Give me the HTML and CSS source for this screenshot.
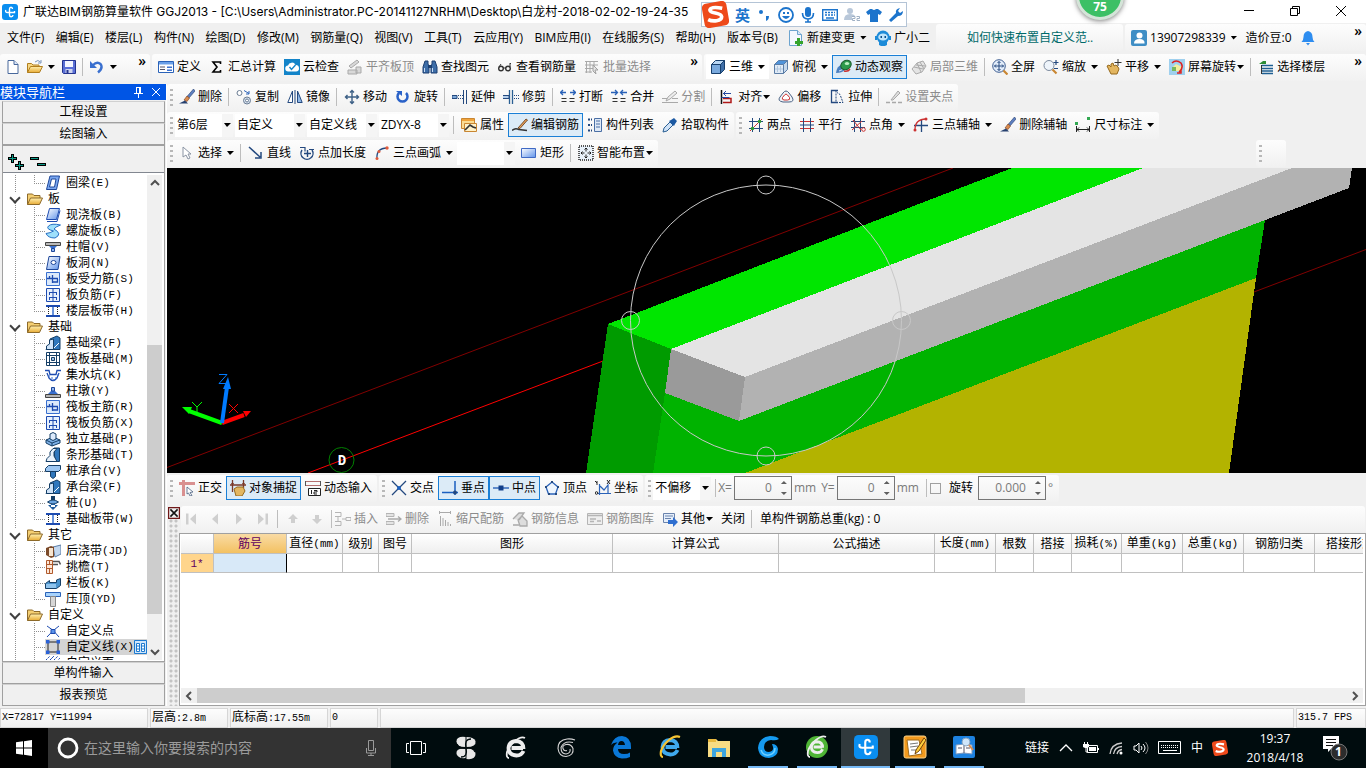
FILE: index.html
```html
<!DOCTYPE html>
<html lang="zh-CN">
<head>
    <meta charset="UTF-8">
    <meta name="viewport" content="width=device-width, initial-scale=1.0">
    <title>广联达BIM钢筋算量软件 GGJ2013</title>
    <link rel="stylesheet" href="styles.css">
</head>
<body>

<!-- icon set -->
<svg class="sprite" width="0" height="0" aria-hidden="true">
    <defs>
        <linearGradient id="g-blue" x1="0" y1="0" x2="1" y2="1"><stop offset="0" stop-color="#fff"/><stop offset="1" stop-color="#5f93ea"/></linearGradient>
        <linearGradient id="g-gold" x1="0" y1="0" x2="0" y2="1"><stop offset="0" stop-color="#fff0b0"/><stop offset="1" stop-color="#e8ab35"/></linearGradient>
    </defs>
    <symbol id="i-app" viewBox="0 0 16 16"><rect width="16" height="16" rx="3" fill="#0a8ef0"/><path d="M10.500 5q0-1.800-1.500-1.800T7.500 5v6q0 1.800 1.700 1.800T11 11M3.800 6q-.8 2.500 1.700 2.500h7V7" fill="none" stroke="#fff" stroke-width="1.400"/></symbol>
    <symbol id="i-doc" viewBox="0 0 16 16"><path d="M3 1.500h6l4 4v9H3z" fill="#fff" stroke="#48689c"/><path d="M9 1.500v4h4" fill="#dce8fa" stroke="#48689c"/></symbol>
    <symbol id="i-open" viewBox="0 0 16 16"><path d="M.5 13.500v-9h4l1.500 1.500h6v2" fill="#f6d784" stroke="#b07e1e"/><path d="M.5 13.500l3-6h12l-3 6z" fill="url(#g-gold)" stroke="#b07e1e"/><path d="M8 3q3-3 5.500 0M14 1v3h-3" fill="none" stroke="#7894bb"/></symbol>
    <symbol id="i-save" viewBox="0 0 16 16"><path d="M1.500 1.500h13v13h-12l-1-1z" fill="#5a6fd6" stroke="#24348f"/><path d="M4 2h8v6H4z" fill="#f4f6ff"/><path d="M4.500 10h7v4h-7z" fill="#cfd5ef"/><path d="M5.500 11h2v3h-2z" fill="#24348f"/></symbol>
    <symbol id="i-undo" viewBox="0 0 16 16"><path d="M4 6q4-4 7.500-1 3 4-2.500 8.500" fill="none" stroke="#3a70cf" stroke-width="2.400"/><path d="M1 2v7h7z" fill="#3a70cf"/></symbol>
    <symbol id="i-define" viewBox="0 0 16 16"><path d="M.5 2.500h15v11H.5z" fill="#fff" stroke="#2a62b8"/><path d="M1 3h14v2.500H1z" fill="#6ba0e8"/><path d="M2 8h5M2 10.500h5" stroke="#556"/><path d="M9 7.500h5v1.500H9zM9 10.500h5v1.500H9z" fill="#3a70cf"/></symbol>
    <symbol id="i-sum" viewBox="0 0 16 16"><path d="M11.500 5V3H4l4 5-4 5h7.500v-2" fill="none" stroke="#000" stroke-width="1.600"/></symbol>
    <symbol id="i-cloud" viewBox="0 0 16 16"><path d="M0 0h16v16H0z" fill="#1384c9"/><path d="M4.500 12.500a3 3 0 0 1-.5-6 4 4 0 0 1 7.500-.5 3.200 3.200 0 0 1 .5 6.500z" fill="#fff"/><path d="M5.500 8l2 2.500 4-4.500" fill="none" stroke="#1384c9" stroke-width="1.400"/></symbol>
    <symbol id="i-level" viewBox="0 0 16 16"><path d="M2 7l8-6 2 2-8 6zM1 11h9v4H1zM9 8h5v6H9z" fill="#d8d8d8" stroke="#a9a9a9"/></symbol>
    <symbol id="i-binoc" viewBox="0 0 16 16"><path d="M3 2h3v3l1 2v7H1V8zM13 2h-3v3L9 7v7h6V8z" fill="#3d6da8" stroke="#1c3f70"/><path d="M2.500 9v4M10.500 9v4" stroke="#c8dcf4"/><path d="M6 6h4v3H6z" fill="#1c3f70"/></symbol>
    <symbol id="i-glasses" viewBox="0 0 16 16"><circle cx="4" cy="9.500" r="2.300" fill="none" stroke="#333" stroke-width="1.400"/><circle cx="11" cy="9.500" r="2.300" fill="none" stroke="#333" stroke-width="1.400"/><path d="M6 9h3M2 8l2-3M13 8V4l1 1" fill="none" stroke="#333"/></symbol>
    <symbol id="i-batch" viewBox="0 0 16 16"><path d="M1 2.500h13M1 6h13M1 9.500h9M1 13h7M2.500 2v12M6 2v12M10 2v6" stroke="#aaa" fill="none"/><path d="M9 6l5 5h-3l1 4-3-3z" fill="#e5e5e5" stroke="#a0a0a0"/></symbol>
    <symbol id="i-cube" viewBox="0 0 16 16"><path d="M1.500 5.500h9v9h-9z" fill="#79a9dd" stroke="#173f6d"/><path d="M1.500 5.500l4-4h9l-4 4z" fill="#b9d7f4" stroke="#173f6d"/><path d="M10.500 5.500l4-4v9l-4 4z" fill="#3e6fa8" stroke="#173f6d"/></symbol>
    <symbol id="i-topview" viewBox="0 0 16 16"><path d="M1.500 5.500h9v9h-9z" fill="#dfeaf6" stroke="#5b7da6"/><path d="M1.500 5.500l4-4h9l-4 4z" fill="#4f93da" stroke="#5b7da6"/><path d="M10.500 5.500l4-4v9l-4 4z" fill="#c6d8ec" stroke="#5b7da6"/><path d="M4.500 7v6M7.500 7v6M2 10h8" stroke="#b1c6de"/></symbol>
    <symbol id="i-orbit" viewBox="0 0 16 16"><path d="M0 14q1-7 5-8l4 5q-3 3-9 3z" fill="#4a7fc0"/><path d="M3 12q5-1 7-5" fill="none" stroke="#d8e6f6"/><ellipse cx="10" cy="6" rx="5.500" ry="4.500" fill="#2d9a4c" stroke="#1c5e30" transform="rotate(-35 10 6)"/><ellipse cx="11" cy="4.500" rx="2.200" ry="1.500" fill="#bdf0c4"/><path d="M8 12q4 1 6-2" fill="none" stroke="#c33" stroke-width="1.500"/></symbol>
    <symbol id="i-part3d" viewBox="0 0 16 16"><path d="M1 10l5-6 6-2 3 5-4 6-6 2z" fill="#e4e4e4" stroke="#aaa"/><path d="M6 4l4 9M3 8l9 2M9 3l4 7M5 6l9 1" stroke="#aaa"/></symbol>
    <symbol id="i-fit" viewBox="0 0 16 16"><circle cx="7" cy="7" r="6.300" fill="#e3edfa" stroke="#3f5f92"/><path d="M7 2.500v9M2.500 7h9M5.500 4L7 2.500 8.500 4M5.500 10L7 11.500 8.500 10M4 5.500L2.500 7 4 8.500M10 5.500L11.500 7 10 8.500" fill="none" stroke="#24497f"/><path d="M11.500 11.500l4 4" stroke="#c98632" stroke-width="2.200"/></symbol>
    <symbol id="i-zoom" viewBox="0 0 16 16"><circle cx="6" cy="6.500" r="5" fill="#eef4fb" stroke="#7c8a9e"/><path d="M9.500 10.500l4 4" stroke="#c98632" stroke-width="2.200"/><path d="M13 1v5M10.500 3.500h5M11 9.500h4" stroke="#24497f" stroke-width="1.200"/></symbol>
    <symbol id="i-pan" viewBox="0 0 16 16"><path d="M1 7l2-1 2 2V5l2-1 1 3 2-1 2 2 1 2-2 5H5z" fill="#e3b660" stroke="#96691d"/><path d="M12 0v7M8.500 3.500h7" stroke="#333"/></symbol>
    <symbol id="i-rotview" viewBox="0 0 16 16"><path d="M0 0h16v16H0z" fill="#9fd0ee"/><path d="M3 9l4-4 6 3v4H4z" fill="#f3ed9c"/><path d="M3 8h4v4H3z" fill="#78b85c"/><path d="M3 4q4-4 9 0 3 5-2 9M12 11v3H8" fill="none" stroke="#d22" stroke-width="1.500"/></symbol>
    <symbol id="i-floors" viewBox="0 0 16 16"><path d="M1 5l4-3h3v3z" fill="#2c8c34"/><path d="M4 6.500h11M4 9.500h11M4 12h11M4 14.500h11" stroke="#1e5f93" stroke-width="1.500"/><path d="M3.500 6v9" stroke="#333"/></symbol>
    <symbol id="i-brush" viewBox="0 0 16 16"><path d="M14.500 0L16 2l-6 7-2-1.500z" fill="#5d7fc0" stroke="#26406f" stroke-width=".6"/><path d="M8 7l2.500 2L8 12.500 5 11z" fill="#d98c4f" stroke="#7b3b18" stroke-width=".6"/><path d="M0 14.500h9l-3-3-2 1z" fill="#26406f"/></symbol>
    <symbol id="i-copy" viewBox="0 0 16 16"><circle cx="3.500" cy="4" r="2.500" fill="#fff" stroke="#6a7c93"/><circle cx="11" cy="11.500" r="3.500" fill="#d7e2f0" stroke="#6a7c93"/><circle cx="11" cy="11.500" r="1.500" fill="#fff" stroke="#6a7c93"/><path d="M8 1.500l5 3M13 2v3h-3" fill="none" stroke="#2a62b8"/></symbol>
    <symbol id="i-mirror" viewBox="0 0 16 16"><path d="M5.500 2v11.500H.8z" fill="#fff" stroke="#24497f"/><path d="M10.500 2v11.500h4.700z" fill="#8fb8e8" stroke="#24497f"/><path d="M8 1v14" stroke="#24497f"/></symbol>
    <symbol id="i-move" viewBox="0 0 16 16"><path d="M8 1.500v13M1.500 8h13M6 3.500l2-2 2 2M6 12.500l2 2 2-2M3.500 6l-2 2 2 2M12.500 6l2 2-2 2" fill="none" stroke="#3d6086" stroke-width="1.400"/></symbol>
    <symbol id="i-rotate" viewBox="0 0 16 16"><path d="M4 4a5 5 0 1 0 7 0" fill="none" stroke="#2a62c8" stroke-width="2.500"/><path d="M1 2h6v5z" fill="#2a62c8"/></symbol>
    <symbol id="i-extend" viewBox="0 0 16 16"><path d="M0 6.500h5v3H0z" fill="#7fa9d8" stroke="#24497f"/><path d="M6 6.500h6M6 9.500h6" stroke="#24497f" stroke-dasharray="1 1"/><path d="M14.500 1v14M11.500 1v14" stroke="#24497f"/></symbol>
    <symbol id="i-trim" viewBox="0 0 16 16"><path d="M6.500 1v14M9.500 1v14" stroke="#2a5f93" stroke-width="1.300"/><path d="M0 6.500h6v3H0" fill="#b6d0ec" stroke="#24497f"/><path d="M11 6.500h5M11 9.500h5" stroke="#24497f" stroke-dasharray="1 1"/></symbol>
    <symbol id="i-break" viewBox="0 0 16 16"><path d="M0 3.500h6M10 3.500h6M3 1L.5 3.500 3 6M13 1l2.500 2.500L13 6" fill="none" stroke="#2a62b8" stroke-width="1.300"/><path d="M1.500 9.500h5M9.500 9.500h5M1.500 12.500h5M9.500 12.500h5" stroke="#333"/></symbol>
    <symbol id="i-join" viewBox="0 0 16 16"><path d="M0 3.500h6M10 3.500h6M4 1l2.500 2.500L4 6M12 1L9.500 3.500 12 6" fill="none" stroke="#2a62b8" stroke-width="1.300"/><path d="M1.500 9.500h5M9.500 9.500h5M1.500 12.500h5M9.500 12.500h5" stroke="#333"/></symbol>
    <symbol id="i-split" viewBox="0 0 16 16"><path d="M0 9.500h5M10 9.500h6M0 13.500h16" stroke="#a9a9a9"/><path d="M4 12l2-4 7-6 2 2-7 6z" fill="#ececec" stroke="#a9a9a9"/></symbol>
    <symbol id="i-align" viewBox="0 0 16 16"><path d="M2.500 1v14" stroke="#111" stroke-width="1.500"/><path d="M4 4.500h8" stroke="#24499f"/><path d="M7 2L4.500 4.500 7 7" fill="none" stroke="#24499f"/><path d="M4 9.500h8v4H4" fill="none" stroke="#b01818" stroke-width="1.500"/><path d="M2.500 8.500h8" stroke="#24499f"/></symbol>
    <symbol id="i-offset" viewBox="0 0 16 16"><path d="M5 4q3-4 6 0l3 4q3 5-3 5H5q-6-1-3-5z" fill="#f1f4f8" stroke="#4b6384"/><path d="M6.500 6q1.500-2 3 0l2 2.500q1 2.500-2 2.500H6q-2.500-.5-1.500-2.500z" fill="#fff" stroke="#c33"/></symbol>
    <symbol id="i-stretch" viewBox="0 0 16 16"><path d="M9 1.500H2.500v12H9" fill="none" stroke="#24497f" stroke-width="1.300"/><path d="M7 1.500v12h7l-3-8-3-2" fill="none" stroke="#24497f" stroke-dasharray="2 1"/></symbol>
    <symbol id="i-grip" viewBox="0 0 16 16"><path d="M0 13.500h16" stroke="#a9a9a9" stroke-dasharray="4 2" stroke-width="1.500"/><path d="M5 11l7-9 2 2-7 7z" fill="#ddd" stroke="#a9a9a9"/></symbol>
    <symbol id="i-prop" viewBox="0 0 16 16"><path d="M.5 1.500h13v10H.5z" fill="#fbdc93" stroke="#c98632"/><path d="M1 2h12v2H1z" fill="#f0a33a"/><path d="M3.500 6.500h12v8h-12z" fill="#fff2c9" stroke="#c98632"/><path d="M4 13l5-5 3 2 3 1" fill="none" stroke="#333" stroke-width="1.700"/></symbol>
    <symbol id="i-editbar" viewBox="0 0 16 16"><path d="M0 13.500q3-3 7-1l8 1" fill="none" stroke="#333" stroke-width="1.500"/><path d="M6 11l8-9 1.500 1L8 11.500z" fill="#e9a35c" stroke="#5b3110" stroke-width=".8"/></symbol>
    <symbol id="i-list" viewBox="0 0 16 16"><path d="M1 2.500h4M1 8h4M1 13.500h4" stroke="#24497f" stroke-width="2" stroke-dasharray="2 1"/><path d="M7.500 1.500h7v13h-7z" fill="#dfe9f6" stroke="#4a6fa5"/><path d="M9 4h4M9 7h4M9 10h4" stroke="#4a6fa5"/></symbol>
    <symbol id="i-dropper" viewBox="0 0 16 16"><path d="M1 15l1-4 6-6 3 3-6 6z" fill="#cfe2f7" stroke="#2a5f93"/><path d="M7 4l5 5 1-2 2-3-3-3-3 2z" fill="#1d5aa3"/></symbol>
    <symbol id="i-twopt" viewBox="0 0 16 16"><path d="M1 4.500h14M1 11.500h14M4.500 1v14M11.500 1v14" stroke="#24497f"/><path d="M2 14L14 2" stroke="#c33"/><circle cx="4.500" cy="11.500" r="1.800" fill="#2c9a34"/><circle cx="11.500" cy="4.500" r="1.800" fill="#2c9a34"/></symbol>
    <symbol id="i-parallel" viewBox="0 0 16 16"><path d="M1 4.500h14M1 11.500h14" stroke="#c33"/><path d="M1 8h14M4.500 1v14M11.500 1v14" stroke="#24497f"/></symbol>
    <symbol id="i-ptangle" viewBox="0 0 16 16"><path d="M1 4.500h14M1 10.500h14M4.500 1v14M10.500 1v14" stroke="#24497f"/><path d="M3 3l8 10M2 13l10-9" stroke="#c33"/><circle cx="13.500" cy="12.500" r="1.800" fill="none" stroke="#c33"/></symbol>
    <symbol id="i-threeaxis" viewBox="0 0 16 16"><path d="M1 8.500h14M8.500 3v12" stroke="#24497f" stroke-width="1.300"/><path d="M2 13q0-11 11-11" fill="none" stroke="#c33" stroke-width="1.300"/><circle cx="2" cy="13" r="1.500" fill="#c33"/><circle cx="13" cy="2" r="1.500" fill="#c33"/></symbol>
    <symbol id="i-dim" viewBox="0 0 16 16"><path d="M1.500 9v6M14.500 9v6M2 12.500h12M4 10.500l-2 2 2 2M12 10.500l2 2-2 2" fill="none" stroke="#222"/><path d="M0 5h3v3H0zM12 0h3v3h-3z" fill="#32a852"/></symbol>
    <symbol id="i-pointer" viewBox="0 0 16 16"><path d="M4 2l8 7H9l2 4-2 1-2-4-3 2z" fill="#fff" stroke="#8a94a3"/></symbol>
    <symbol id="i-line" viewBox="0 0 16 16"><path d="M1 2l11 10M13 7v6H7" fill="none" stroke="#24497f" stroke-width="1.500"/></symbol>
    <symbol id="i-ptlen" viewBox="0 0 16 16"><path d="M3 5a6 6 0 1 0 10 0M8.500 5v7M5 8.500h7" fill="none" stroke="#24497f" stroke-width="1.400"/><path d="M1 2.500h5v4M10 4.500h5" fill="none" stroke="#24497f" stroke-width="1.200"/></symbol>
    <symbol id="i-arc" viewBox="0 0 16 16"><path d="M3 14Q2 3 13 3" fill="none" stroke="#24497f" stroke-width="1.300"/><circle cx="3" cy="13.500" r="1.500" fill="#e25b3c"/><circle cx="5" cy="6.500" r="1.500" fill="#e25b3c"/><circle cx="13" cy="3" r="1.700" fill="#e25b3c"/></symbol>
    <symbol id="i-rect" viewBox="0 0 16 16"><path d="M.5 3.500h14v9H.5z" fill="url(#g-blue)" stroke="#3f69c4"/></symbol>
    <symbol id="i-smart" viewBox="0 0 16 16"><path d="M1 1h14v14H1z" fill="#e9f2fb" stroke="#222" stroke-width="1.500" stroke-dasharray="1 1"/><path d="M8 3v3.500M8 9.500V13M3 8h3.500M9.500 8H13M6.500 4.500L8 3l1.500 1.500M6.500 11.500L8 13l1.500-1.500M4.500 6.500L3 8l1.500 1.500M11.500 6.500L13 8l-1.500 1.500" fill="none" stroke="#222"/></symbol>
    <symbol id="i-ortho" viewBox="0 0 16 16"><path d="M0 3.500h16M4.500 0v16" stroke="#d99090" stroke-width="3"/><path d="M8 7l6 5-3 .5 2 3-2 .5-1.500-3L8 14z" fill="#fff" stroke="#4a5f80" stroke-width=".8"/></symbol>
    <symbol id="i-snap" viewBox="0 0 16 16"><path d="M2.500 0v12M13.500 0v8M0 5h16" stroke="#7a3a2a" stroke-width="1.300"/><path d="M1 3l1.500 3L4 3M12 3l1.500 3L15 3" fill="#7a3a2a"/><path d="M4 9l3-2 6 0 2 4-3 5H6z" fill="#e3b660" stroke="#96691d"/></symbol>
    <symbol id="i-dyn" viewBox="0 0 16 16"><path d="M0 1.500h16M0 5.500h16" stroke="#b57070"/><path d="M.5 1v5M15.500 1v5" stroke="#555"/><path d="M3.500 8.500h12v7h-12z" fill="#fff" stroke="#222"/><path d="M6.500 10v4M9 10.500h3v1.500H9v2h3" stroke="#222" fill="none"/></symbol>
    <symbol id="i-cross" viewBox="0 0 16 16"><path d="M1 1l14 14M15 1L1 15" stroke="#24497f" stroke-width="1.300"/><circle cx="8" cy="8" r="2" fill="#1a5fc0"/></symbol>
    <symbol id="i-perp" viewBox="0 0 16 16"><path d="M0 12.500h16M13 1v14" stroke="#1a5fc0" stroke-width="1.500"/><circle cx="13" cy="12.500" r="2" fill="#24497f"/></symbol>
    <symbol id="i-mid" viewBox="0 0 16 16"><path d="M0 8h16" stroke="#2a62b8" stroke-width="1.400"/><path d="M5.500 5.500h5v5h-5z" fill="#123f8a"/></symbol>
    <symbol id="i-vertex" viewBox="0 0 16 16"><path d="M8 2l6 5-2.500 7h-7L2 7z" fill="#eef5fd" stroke="#2a62b8" stroke-width="1.300"/><path d="M7 1h2v2H7zM13 6h2v2h-2zM1 6h2v2H1zM4 13h2v2H4zM11 13h2v2h-2z" fill="#24497f"/></symbol>
    <symbol id="i-coord" viewBox="0 0 16 16"><path d="M4.500 4v11M3 13.500h13M5 6l4 4 4-5v8" fill="none" stroke="#2a62b8" stroke-width="1.200"/><path d="M0 1l2 2M2 1v4M12 0l3 4M15 0l-3 4" stroke="#222"/><circle cx="1.500" cy="13" r="1.300" fill="none" stroke="#222"/></symbol>
    <symbol id="i-first" viewBox="0 0 16 16"><path d="M3 2.500h2.500v11H3zM13 2.500v11L7 8z" fill="#cfcfcf"/></symbol>
    <symbol id="i-prev" viewBox="0 0 16 16"><path d="M11 2.500v11L5 8z" fill="#cfcfcf"/></symbol>
    <symbol id="i-next" viewBox="0 0 16 16"><path d="M5 2.500v11L11 8z" fill="#cfcfcf"/></symbol>
    <symbol id="i-last" viewBox="0 0 16 16"><path d="M3 2.500v11L9 8zM10.500 2.500H13v11h-2.500z" fill="#cfcfcf"/></symbol>
    <symbol id="i-up" viewBox="0 0 16 16"><path d="M8 3l5 5h-3v4H6V8H3z" fill="#cfcfcf"/></symbol>
    <symbol id="i-down" viewBox="0 0 16 16"><path d="M8 13L3 8h3V4h4v4h3z" fill="#cfcfcf"/></symbol>
    <symbol id="i-insert" viewBox="0 0 16 16"><path d="M0 1.500h6v4H0M0 14.500h6v-4H0M3 6v4" fill="none" stroke="#b5b5b5"/><path d="M7 8h4M11 6.500h5v3h-5z" fill="none" stroke="#b5b5b5"/></symbol>
    <symbol id="i-delrow" viewBox="0 0 16 16"><path d="M0 2.500h8v3H0zM0 10.500h8v3H0z" fill="#e4e4e4" stroke="#b5b5b5"/><path d="M2 8h13M12 5.500L15 8l-3 2.500" fill="none" stroke="#aaa" stroke-width="1.300"/></symbol>
    <symbol id="i-scale" viewBox="0 0 16 16"><path d="M2 1.500h12M2.500 0v3M13.500 0v3M3.500 5v10M6 7v8M8.500 9v6M11 11v4M13.500 13v2" stroke="#aaa"/></symbol>
    <symbol id="i-info" viewBox="0 0 16 16"><path d="M1 8l6-6 5 0-5 7M6 9l4-4 5 5v5H8z" fill="#ddd" stroke="#aaa" stroke-width="1.300"/><path d="M1 13h6v2H1z" fill="#bbb"/></symbol>
    <symbol id="i-library" viewBox="0 0 16 16"><path d="M.5 2.500h15v11H.5z" fill="#eee" stroke="#b5b5b5"/><path d="M1 4.500h14M3 8h6M3 10.500h4M10 10h4" stroke="#b5b5b5" stroke-width="1.400"/></symbol>
    <symbol id="i-other" viewBox="0 0 16 16"><path d="M1.500 2.500h11v9h-11z" fill="#e6effb" stroke="#6b84ad"/><path d="M3 5h8M3 7.500h6" stroke="#6b84ad"/><path d="M6 9h5V6l5 5-5 5v-3H6z" fill="#2f6fd0"/></symbol>
    <symbol id="i-newchange" viewBox="0 0 16 16"><path d="M1.500.5h8l4 4v11h-12z" fill="#f4f8fe" stroke="#6da4cf"/><path d="M9.500.5v4h4" fill="#d5e6f8" stroke="#6da4cf"/><path d="M9 8h3v3h3v3h-3v2H9v-2H7v-3h2z" fill="#36a42c"/></symbol>
    <symbol id="i-robot" viewBox="0 0 16 16"><circle cx="8" cy="7" r="6.500" fill="#1d8bd8"/><path d="M4 10h8v5l-2 1H6l-2-1z" fill="#1d8bd8"/><ellipse cx="8" cy="7" rx="4.800" ry="3.600" fill="#bfe4fb"/><path d="M5.500 6H7v2H5.500zM9.500 6H11v2H9.500z" fill="#0b4c86"/><path d="M0 6h2v4H0zM14 6h2v4h-2z" fill="#1d8bd8"/></symbol>
    <symbol id="i-user" viewBox="0 0 16 16"><rect width="16" height="16" rx="2" fill="#3f8ec5"/><circle cx="8.500" cy="5.500" r="3" fill="#fff"/><path d="M3 13.500q0-4.500 5.500-4.500t5 4.500z" fill="#fff"/></symbol>
    <symbol id="i-bell" viewBox="0 0 16 16"><path d="M8 1q4.500 1 4.500 6 0 3 2 5H1.500q2-2 2-5Q3.500 2 8 1z" fill="#2e8df0"/><path d="M6 13h4l-2 2.500z" fill="#2e8df0"/></symbol>

    <!-- tree icons -->
    <symbol id="t-folder" viewBox="0 0 16 16"><path d="M.5 13.500V3h5L7 4.500h6v3" fill="#f5cf72" stroke="#8d6a2a"/><path d="M.5 13.500l3-6.500h12l-3 6.500z" fill="url(#g-gold)" stroke="#8d6a2a"/></symbol>
    <symbol id="t-ring" viewBox="0 0 16 16"><path d="M5 1h9.500l-3 13.500h-10z" fill="#7aa7f0" stroke="#1d4699"/><path d="M6.500 4H11l-1.500 8h-5z" fill="#fff" stroke="#1d4699"/></symbol>
    <symbol id="t-slab" viewBox="0 0 16 16"><path d="M4.500 1.500h10l-3 11h-10z" fill="url(#g-blue)" stroke="#1d4bb0"/><path d="M2 14.500h10l3-11" fill="none" stroke="#1d4bb0"/></symbol>
    <symbol id="t-spiral" viewBox="0 0 16 16"><path d="M15.500 2q-9-2-12 1-3 3 5 5-3 2-7.500 2.500 2 4.500 9 4.500 8-4-1-9 1-2 6.500-4z" fill="#9fe0fb" stroke="#2670c4"/></symbol>
    <symbol id="t-cap" viewBox="0 0 16 16"><path d="M.5 3.500h15v3H.5z" fill="#b9b9b9" stroke="#444"/><path d="M4 7h8l-3 3H7z" fill="#3a70cf"/><path d="M6.500 9.500h3v3h-3z" fill="#8fb4ee" stroke="#1d4699"/></symbol>
    <symbol id="t-hole" viewBox="0 0 16 16"><path d="M4 1.500h11l-2 13H1.500z" fill="url(#g-blue)" stroke="#1d4699"/><ellipse cx="8.500" cy="7.500" rx="2.500" ry="2" fill="#fff" stroke="#1d4699"/></symbol>
    <symbol id="t-force" viewBox="0 0 16 16"><path d="M1.500 1.500h13v13h-13z" fill="#dceafb" stroke="#3a70cf"/><path d="M2 7.500h11M7.500 4v8M4.500 5v3M7.500 11h5V8" fill="none" stroke="#1d4bb0" stroke-width="1.300"/></symbol>
    <symbol id="t-neg" viewBox="0 0 16 16"><path d="M1.500 1.500h13v13h-13z" fill="#e6f0fd" stroke="#1d4bb0"/><path d="M8 2v12M4 5.500h8M4 10.500h8M4.500 5v3M11.500 5v3M4.500 10v3M11.500 10v3" fill="none" stroke="#1d4bb0"/></symbol>
    <symbol id="t-band" viewBox="0 0 16 16"><path d="M1 3h14M1 13h14" stroke="#1d4bb0" stroke-width="2"/><path d="M3.500 4v8M12.500 4v8" stroke="#222" stroke-dasharray="1 1"/><path d="M8 4v8" stroke="#3a70cf" stroke-width="1.500"/></symbol>
    <symbol id="t-beam" viewBox="0 0 16 16"><path d="M1 14.500L5 9V4l7-3 3 2v11.500z" fill="#2f77bd" stroke="#153e66"/><path d="M1.500 14.500V11l3-2V5l4-1v10.500z" fill="#cfe3f8" stroke="#153e66"/><path d="M9 13l5-5" stroke="#fff"/></symbol>
    <symbol id="t-raft" viewBox="0 0 16 16"><path d="M1.500 1.500h13v13h-13z" fill="#fff" stroke="#153e66"/><path d="M4.500 1v14M11.500 1v14M1 4.500h14M1 11.500h14" stroke="#153e66"/><path d="M6.500 6.500h3v3h-3z" fill="#9dc3ec" stroke="#153e66"/></symbol>
    <symbol id="t-pit" viewBox="0 0 16 16"><path d="M0 3.500h4l1 4h6l1-4h4M2 6l2 5q4 5 8 0l2-5" fill="none" stroke="#1d4bb0" stroke-width="1.300"/><path d="M3 9h2M6 11h2M10 11h2M8 13h2M12 8h2" stroke="#3a70cf"/></symbol>
    <symbol id="t-pier" viewBox="0 0 16 16"><path d="M.5 11.500h15v3H.5z" fill="#b5b5b5" stroke="#444"/><path d="M3 11l3-3h4l3 3z" fill="#3a70cf"/><path d="M6.500 4.500h3V8h-3z" fill="#8fb4ee" stroke="#1d4699"/></symbol>
    <symbol id="t-pad" viewBox="0 0 16 16"><path d="M1 9l7-3 7 3v3l-8 3-6-3z" fill="#7fb2e8" stroke="#153e66"/><path d="M1 9l6 3 8-3M7 12v3" fill="none" stroke="#153e66"/><path d="M5 3l3-1.500L11 3v5l-3 1.500L5 8z" fill="#dceafb" stroke="#153e66"/></symbol>
    <symbol id="t-strip" viewBox="0 0 16 16"><path d="M9 1h5.500v13.500H10z" fill="#2f77bd" stroke="#153e66"/><path d="M1 14.500l1-3 3-3V5l3-3.500h4L9 5v4l3 5.500z" fill="#e8f2fc" stroke="#153e66"/></symbol>
    <symbol id="t-pilecap" viewBox="0 0 16 16"><path d="M.5 5.500l3-3h12v4l-2 2H.5z" fill="#9cc6f2" stroke="#153e66"/><path d="M5.500 8.500h5v5L8 15.500l-2.500-2z" fill="#2f77bd" stroke="#153e66"/></symbol>
    <symbol id="t-pile" viewBox="0 0 16 16"><path d="M6 1h4v4H6z" fill="#153e66"/><path d="M2.500 7q5.500-4 11 0-5.500 4-11 0z" fill="#6aa4df" stroke="#153e66"/><path d="M6 9h4v3H6zM3 10l5 5 5-5z" fill="#1d5a9c"/></symbol>
    <symbol id="t-post" viewBox="0 0 16 16"><path d="M8 4l8-2v9l-6 3z" fill="#c3d8f0" stroke="#5b7da6"/><path d="M1 5l5-2 3 1v10l-3 1-5-3z" fill="#7b4a2a"/><path d="M4 5h4v8H4z" fill="#f7e5d0"/></symbol>
    <symbol id="t-eave" viewBox="0 0 16 16"><path d="M1.500 1.500h6v13h-6zM1 5.500h6M1 9.500h6M4.500 2v3M4.500 10v4" fill="#fce6d6" stroke="#b05a2c"/><path d="M8 2.500h6l1.500 3M8 5.500h5" fill="none" stroke="#555" stroke-width="1.600"/></symbol>
    <symbol id="t-rail" viewBox="0 0 16 16"><path d="M.5 8.500l4-3v2h7V5l4-1.500v7l-4 3H.5z" fill="#4a94cf" stroke="#153e66"/><path d="M1 9h10v4H1z" fill="#8fc4ee"/></symbol>
    <symbol id="t-coping" viewBox="0 0 16 16"><path d="M.5 1.500h15v4H.5z" fill="#a7d2fb" stroke="#2a62b8"/><path d="M5.500 5.500h5v10h-5z" fill="#d6d6d6" stroke="#888"/></symbol>
    <symbol id="t-point" viewBox="0 0 16 16"><path d="M2 3q6 3 12 11M14 3Q8 7 2 14" fill="none" stroke="#1d4bb0"/><path d="M6 6.500h4v4H6z" fill="#5b93ea" stroke="#1d4bb0"/></symbol>
    <symbol id="t-frame" viewBox="0 0 16 16"><path d="M3 3h10v10H3z" fill="none" stroke="#222"/><path d="M1 1h3.500v3.500H1zM11.500 1H15v3.500h-3.500zM1 11.500h3.500V15H1zM11.500 11.500H15V15h-3.500z" fill="#2a62d8"/></symbol>
    <symbol id="t-area" viewBox="0 0 16 16"><path d="M1 5l4-4M5 5l4-4M9 5l4-4M1 9l8-8M5 13L15 3" stroke="#1d4bb0" stroke-dasharray="2 1"/></symbol>

    <!-- taskbar icons -->
    <symbol id="k-s" viewBox="0 0 24 24"><rect x="1" y="1" width="22" height="22" rx="4" fill="#ee4a1b" transform="rotate(-10 12 12)"/><path d="M18 6.500q-10-2-11 1.500c0 3.500 10 2 10.500 6 0 4-8 4.500-12 2.500" fill="none" stroke="#fff" stroke-width="3.200"/></symbol>
    <symbol id="k-knot" viewBox="0 0 24 24"><g fill="#e8e8e8"><path d="M11.500 1q-9-1-9 4.500t9 5.500z"/><path d="M12.500 11q10 0 9-6-2-4-9-4z"/><path d="M11.500 13q-10-1-9 5 2 5 9 4z"/><path d="M12.500 23q9 1 9-5t-9-5z"/></g><path d="M17 3q-7 0-5 9t-5 9M3 8q2 5 9 4t9 4" fill="none" stroke="#000c0e" stroke-width="1.300"/></symbol>
    <symbol id="k-e" viewBox="0 0 24 24"><path d="M19 12H7.500M19.500 13q0-8-7.500-8-7 .5-7.500 7 0 7 8 7.500 5 0 7-4.500" fill="none" stroke="currentColor" stroke-width="3.800"/></symbol>
    <symbol id="k-orbit" viewBox="0 0 24 24"><path d="M21 2q-4-2-10 3-6 5-8 11-1 6 2 6" fill="none" stroke="currentColor" stroke-width="1.800"/></symbol>
    <symbol id="k-swirl" viewBox="0 0 24 24"><path d="M21 4q-4-1.500-8-1Q4 4 4 12.500q1 8 8 8 8-1 7-8-2-5-7-4-4 1-3 4 1 3 4 2M19 6.500q-9-2-12 5 0 6.500 5 6.500 5-1 4-5" fill="none" stroke="#d5d5d5" stroke-width="1.100"/></symbol>
    <symbol id="k-edge" viewBox="0 0 24 24"><path d="M2 10Q5 1 13 1q9 1 9 11v2H9q0 5 6 5 4 0 6-1.500V22q-3 1.500-8 1.500-8-1-9-8 0-5 4.500-8Q4 7 2 10zM9 10h7q-.5-4-3.500-4T9 10z" fill="#0a78d7" fill-rule="evenodd"/></symbol>
    <symbol id="k-folder" viewBox="0 0 24 24"><path d="M1 4h8l2 2h12v16H1z" fill="#f8dc83"/><path d="M1 4h8v3H1z" fill="#e9b93e"/><path d="M5 22v-9h14v9h-4v-5H9v5z" fill="#3ea5de"/></symbol>
    <symbol id="k-glodon" viewBox="0 0 24 24"><path d="M23 4q-2-3-9-3Q3 2 2 13q1 10 11 10 9-1 9-9-1-5-6-5l1 3q1 4-4 5-5 0-5-5 0-6 7-7 5 1 8-1z" fill="#159bf0"/><path d="M5 15q2 6 8 5 6-1 6-7" fill="none" stroke="#6fd0ff" stroke-width="1.500"/></symbol>
    <symbol id="k-green" viewBox="0 0 24 24"><circle cx="12" cy="12" r="11" fill="#4fb536"/></symbol>
    <symbol id="k-note" viewBox="0 0 24 24"><rect x="1" y="1" width="22" height="22" rx="2" fill="#f29a1d" stroke="#fbd48b"/><path d="M4 5h12l3 14-13 2z" fill="#fff" stroke="#a06d1c"/><path d="M7 9l8-1M7 12l8-1M8 15h6" stroke="#777"/><path d="M21 3l-8 12-1 4 4-3 7-11z" fill="#ffcf3d" stroke="#73430a"/></symbol>
    <symbol id="k-book" viewBox="0 0 24 24"><rect x="1" y="1" width="22" height="22" rx="2" fill="#1d82e0"/><path d="M4 10l8-1 8 1v9l-8-1-8 1z" fill="#fff" stroke="#7a99c0"/><path d="M12 9v9M6 13h4M14 13h4" stroke="#556"/><circle cx="14" cy="7" r="4" fill="#cfe6fa" stroke="#8aa5bf"/><path d="M17 10l4 5" stroke="#d98c4f" stroke-width="2"/></symbol>
</svg>

<header class="titlebar">
    <svg class="icon"><use href="#i-app"/></svg>
    <h1>广联达BIM钢筋算量软件 GGJ2013 - [C:\Users\Administrator.PC-20141127NRHM\Desktop\白龙村-2018-02-02-19-24-35</h1>
    <div class="window-buttons">
        <button aria-label="最小化"><svg class="icon" viewBox="0 0 16 16"><path d="M3 6.500h10" stroke="#000"/></svg></button>
        <button aria-label="还原"><svg class="icon" viewBox="0 0 16 16"><path d="M3.500 4.500h7v7h-7zM5.500 4.500v-2h7v7h-2" fill="none" stroke="#000"/></svg></button>
        <button aria-label="关闭"><svg class="icon" viewBox="0 0 16 16"><path d="M3 2l10 10M13 2L3 12" stroke="#000"/></svg></button>
    </div>
</header>

<div class="ime">
    <svg class="ime-logo"><use href="#k-s"/></svg>
    <b>英</b>
    <svg class="icon" viewBox="0 0 16 16"><circle cx="5" cy="5" r="2" fill="#1c74cc"/><path d="M10 9h3q0 4-3 5z" fill="#1c74cc"/></svg>
    <svg class="icon" viewBox="0 0 16 16"><circle cx="8" cy="8" r="7" fill="none" stroke="#1c74cc" stroke-width="1.800"/><path d="M4 9q4 6 8 0zM5 5h2v2H5zM9 5h2v2H9z" fill="#1c74cc"/></svg>
    <svg class="icon" viewBox="0 0 16 16"><rect x="5" y="0" width="6" height="10" rx="3" fill="#1c74cc"/><path d="M2.500 6q0 6 5.500 6t5.500-6M8 12v3M5 15h6" fill="none" stroke="#1c74cc" stroke-width="1.600"/></svg>
    <svg class="icon" viewBox="0 0 16 16"><path d="M.7 2.700h14.600v10.600H.7z" fill="#fff" stroke="#1c74cc" stroke-width="1.400"/><path d="M3 5.500h10M3 8h10" stroke="#1c74cc" stroke-width="1.500" stroke-dasharray="2 1"/><path d="M4 11h8" stroke="#1c74cc" stroke-width="1.500"/></svg>
    <svg class="icon" viewBox="0 0 16 16"><circle cx="6" cy="4" r="3" fill="#b8c7d9"/><path d="M0 13q0-6 6-6 4 0 5 2H8v4z" fill="#b8c7d9"/><path d="M8 9.500h3v2H8.500v2H11M12.500 9.500h3v2H13v2h3" fill="none" stroke="#9fb0c4"/></svg>
    <svg class="icon" viewBox="0 0 16 16"><path d="M4 2h2q2 2 4 0h2l4 3-2 3-2-1v8H4V7L2 8 0 5z" fill="#1c74cc"/></svg>
    <svg class="icon" viewBox="0 0 16 16"><path d="M1 13l7-7q-1-4 4-5l-2 3 2 2 3-2q0 5-5 5l-7 6z" fill="#1c74cc"/></svg>
</div>
<div class="ball">75</div>

<nav class="menubar">
    <div class="menus">
        <button>文件(F)</button><button>编辑(E)</button><button>楼层(L)</button><button>构件(N)</button><button>绘图(D)</button><button>修改(M)</button><button>钢筋量(Q)</button><button>视图(V)</button><button>工具(T)</button><button>云应用(Y)</button><button>BIM应用(I)</button><button>在线服务(S)</button><button>帮助(H)</button><button>版本号(B)</button>
    </div>
    <button class="tool"><svg class="icon"><use href="#i-newchange"/></svg>新建变更<i class="drop"></i></button>
    <button class="tool"><svg class="icon"><use href="#i-robot"/></svg>广小二</button>
    <div class="strip tip"><a href="#">如何快速布置自定义范..</a></div>
    <div class="strip grow">
        <button class="tool"><svg class="icon"><use href="#i-user"/></svg>13907298339<i class="drop"></i></button>
        <button class="tool">造价豆:0</button>
        <button class="tool" aria-label="消息"><svg class="icon"><use href="#i-bell"/></svg></button>
        <span class="more">»</span>
    </div>
</nav>

<div class="row">
    <div class="strip file-tools">
        <button class="tool" aria-label="新建"><svg class="icon"><use href="#i-doc"/></svg></button>
        <button class="tool" aria-label="打开"><svg class="icon"><use href="#i-open"/></svg><i class="drop"></i></button>
        <button class="tool" aria-label="保存"><svg class="icon"><use href="#i-save"/></svg></button>
        <i class="sep"></i>
        <button class="tool" aria-label="撤销"><svg class="icon"><use href="#i-undo"/></svg><i class="drop"></i></button>
        <span class="more">»</span>
    </div>
    <div class="strip calc-tools">
        <button class="tool"><svg class="icon"><use href="#i-define"/></svg>定义</button>
        <button class="tool"><svg class="icon"><use href="#i-sum"/></svg>汇总计算</button>
        <button class="tool"><svg class="icon"><use href="#i-cloud"/></svg>云检查</button>
        <button class="tool" disabled><svg class="icon"><use href="#i-level"/></svg>平齐板顶</button>
        <button class="tool"><svg class="icon"><use href="#i-binoc"/></svg>查找图元</button>
        <button class="tool"><svg class="icon"><use href="#i-glasses"/></svg>查看钢筋量</button>
        <button class="tool" disabled><svg class="icon"><use href="#i-batch"/></svg>批量选择</button>
        <span class="more">»</span>
    </div>
    <div class="strip grow">
        <button class="tool combo"><svg class="icon"><use href="#i-cube"/></svg>三维<i class="drop"></i></button>
        <button class="tool"><svg class="icon"><use href="#i-topview"/></svg>俯视<i class="drop"></i></button>
        <button class="tool on"><svg class="icon"><use href="#i-orbit"/></svg>动态观察</button>
        <button class="tool" disabled><svg class="icon"><use href="#i-part3d"/></svg>局部三维</button>
        <i class="sep"></i>
        <button class="tool"><svg class="icon"><use href="#i-fit"/></svg>全屏</button>
        <button class="tool"><svg class="icon"><use href="#i-zoom"/></svg>缩放<i class="drop"></i></button>
        <button class="tool"><svg class="icon"><use href="#i-pan"/></svg>平移<i class="drop"></i></button>
        <button class="tool"><svg class="icon"><use href="#i-rotview"/></svg>屏幕旋转<i class="drop tight"></i></button>
        <i class="sep"></i>
        <button class="tool"><svg class="icon"><use href="#i-floors"/></svg>选择楼层</button>
        <span class="more">»</span>
    </div>
</div>

<main>
    <aside class="sidebar">
        <div class="panel-title">
            <h2>模块导航栏</h2>
            <button aria-label="固定"><svg class="icon" viewBox="0 0 16 16"><path d="M6.500 3v6M10.500 3v6M6 3.500h5M9.500 3v6M4 9.500h9M8.500 10v4" stroke="#fff" fill="none"/></svg></button>
            <button aria-label="关闭"><svg class="icon" viewBox="0 0 16 16"><path d="M4 4l8 8M12 4l-8 8" stroke="#fff"/></svg></button>
        </div>
        <button class="module">工程设置</button>
        <button class="module">绘图输入</button>
        <div class="tree-panel">
            <div class="tree-tools">
                <button aria-label="展开"><svg class="icon" viewBox="0 0 16 16"><path d="M4.500 0v9M0 4.500h9M11.500 7v9M7 11.500h9" stroke="#000" stroke-width="3"/><path d="M4.500 1v7M1 4.500h7M11.500 8v7M8 11.500h7" stroke="#0a9a86"/></svg></button>
                <button aria-label="折叠"><svg class="icon" viewBox="0 0 16 16"><path d="M0 4.500h9M7 10.500h9" stroke="#000" stroke-width="3"/><path d="M1 4.500h7M8 10.500h7" stroke="#0a9a86"/></svg></button>
            </div>
            <div class="tree">
                <ul class="branches">
                    <li>
                        <ul>
                            <li><svg class="icon"><use href="#t-ring"/></svg>圈梁<kbd>(E)</kbd></li>
                        </ul>
                    </li>
                    <li>
                        <div class="node"><svg class="icon"><use href="#t-folder"/></svg>板</div>
                        <ul>
                            <li><svg class="icon"><use href="#t-slab"/></svg>现浇板<kbd>(B)</kbd></li>
                            <li><svg class="icon"><use href="#t-spiral"/></svg>螺旋板<kbd>(B)</kbd></li>
                            <li><svg class="icon"><use href="#t-cap"/></svg>柱帽<kbd>(V)</kbd></li>
                            <li><svg class="icon"><use href="#t-hole"/></svg>板洞<kbd>(N)</kbd></li>
                            <li><svg class="icon"><use href="#t-force"/></svg>板受力筋<kbd>(S)</kbd></li>
                            <li><svg class="icon"><use href="#t-neg"/></svg>板负筋<kbd>(F)</kbd></li>
                            <li><svg class="icon"><use href="#t-band"/></svg>楼层板带<kbd>(H)</kbd></li>
                        </ul>
                    </li>
                    <li>
                        <div class="node"><svg class="icon"><use href="#t-folder"/></svg>基础</div>
                        <ul>
                            <li><svg class="icon"><use href="#t-beam"/></svg>基础梁<kbd>(F)</kbd></li>
                            <li><svg class="icon"><use href="#t-raft"/></svg>筏板基础<kbd>(M)</kbd></li>
                            <li><svg class="icon"><use href="#t-pit"/></svg>集水坑<kbd>(K)</kbd></li>
                            <li><svg class="icon"><use href="#t-pier"/></svg>柱墩<kbd>(Y)</kbd></li>
                            <li><svg class="icon"><use href="#t-force"/></svg>筏板主筋<kbd>(R)</kbd></li>
                            <li><svg class="icon"><use href="#t-neg"/></svg>筏板负筋<kbd>(X)</kbd></li>
                            <li><svg class="icon"><use href="#t-pad"/></svg>独立基础<kbd>(P)</kbd></li>
                            <li><svg class="icon"><use href="#t-strip"/></svg>条形基础<kbd>(T)</kbd></li>
                            <li><svg class="icon"><use href="#t-pilecap"/></svg>桩承台<kbd>(V)</kbd></li>
                            <li><svg class="icon"><use href="#t-beam"/></svg>承台梁<kbd>(F)</kbd></li>
                            <li><svg class="icon"><use href="#t-pile"/></svg>桩<kbd>(U)</kbd></li>
                            <li><svg class="icon"><use href="#t-band"/></svg>基础板带<kbd>(W)</kbd></li>
                        </ul>
                    </li>
                    <li>
                        <div class="node"><svg class="icon"><use href="#t-folder"/></svg>其它</div>
                        <ul>
                            <li><svg class="icon"><use href="#t-post"/></svg>后浇带<kbd>(JD)</kbd></li>
                            <li><svg class="icon"><use href="#t-eave"/></svg>挑檐<kbd>(T)</kbd></li>
                            <li><svg class="icon"><use href="#t-rail"/></svg>栏板<kbd>(K)</kbd></li>
                            <li><svg class="icon"><use href="#t-coping"/></svg>压顶<kbd>(YD)</kbd></li>
                        </ul>
                    </li>
                    <li>
                        <div class="node"><svg class="icon"><use href="#t-folder"/></svg>自定义</div>
                        <ul>
                            <li><svg class="icon"><use href="#t-point"/></svg>自定义点</li>
                            <li class="current"><svg class="icon"><use href="#t-frame"/></svg>自定义线<kbd>(X)</kbd><svg class="cols" viewBox="0 0 13 14"><path d="M.5.5h12v13H.5z" fill="#cfe6fb" stroke="#1d7ad0"/><path d="M2.500 3.500h3v8h-3zM7.500 3.500h3v8h-3zM3 6h2M3 9h2M8 6h2M8 9h2" fill="#fff" stroke="#1d7ad0"/></svg></li>
                            <li><svg class="icon"><use href="#t-area"/></svg>自定义面</li>
                        </ul>
                    </li>
                </ul>
                <div class="vscroll">
                    <svg class="icon" viewBox="0 0 16 16"><path d="M4 10l4-4 4 4" fill="none" stroke="#505050" stroke-width="2"/></svg>
                    <div class="thumb"></div>
                    <svg class="icon" viewBox="0 0 16 16"><path d="M4 6l4 4 4-4" fill="none" stroke="#505050" stroke-width="2"/></svg>
                </div>
            </div>
        </div>
        <button class="module">单构件输入</button>
        <button class="module">报表预览</button>
    </aside>

    <section class="work">
        <div class="row">
            <div class="strip"><i class="grip"></i>
                <button class="tool"><svg class="icon"><use href="#i-brush"/></svg>删除</button>
                <i class="sep"></i>
                <button class="tool"><svg class="icon"><use href="#i-copy"/></svg>复制</button>
                <button class="tool"><svg class="icon"><use href="#i-mirror"/></svg>镜像</button>
                <i class="sep"></i>
                <button class="tool"><svg class="icon"><use href="#i-move"/></svg>移动</button>
                <button class="tool"><svg class="icon"><use href="#i-rotate"/></svg>旋转</button>
                <i class="sep"></i>
                <button class="tool"><svg class="icon"><use href="#i-extend"/></svg>延伸</button>
                <button class="tool"><svg class="icon"><use href="#i-trim"/></svg>修剪</button>
                <i class="sep"></i>
                <button class="tool"><svg class="icon"><use href="#i-break"/></svg>打断</button>
                <button class="tool"><svg class="icon"><use href="#i-join"/></svg>合并</button>
                <button class="tool" disabled><svg class="icon"><use href="#i-split"/></svg>分割</button>
                <i class="sep"></i>
                <button class="tool"><svg class="icon"><use href="#i-align"/></svg>对齐<i class="drop tight"></i></button>
                <button class="tool"><svg class="icon"><use href="#i-offset"/></svg>偏移</button>
                <button class="tool"><svg class="icon"><use href="#i-stretch"/></svg>拉伸</button>
                <i class="sep"></i>
                <button class="tool" disabled><svg class="icon"><use href="#i-grip"/></svg>设置夹点</button>
            </div>
        </div>

        <div class="row">
            <div class="strip"><i class="grip"></i>
                <span class="pick short"><select aria-label="楼层"><option>第6层</option></select></span>
                <span class="pick"><select aria-label="构件大类"><option>自定义</option></select></span>
                <span class="pick"><select aria-label="构件类型"><option>自定义线</option></select></span>
                <span class="pick"><select aria-label="构件"><option>ZDYX-8</option></select></span>
                <i class="sep"></i>
                <button class="tool"><svg class="icon"><use href="#i-prop"/></svg>属性</button>
                <button class="tool on"><svg class="icon"><use href="#i-editbar"/></svg>编辑钢筋</button>
                <button class="tool"><svg class="icon"><use href="#i-list"/></svg>构件列表</button>
                <button class="tool"><svg class="icon"><use href="#i-dropper"/></svg>拾取构件</button>
            </div>
            <div class="strip"><i class="grip"></i>
                <button class="tool"><svg class="icon"><use href="#i-twopt"/></svg>两点</button>
                <button class="tool"><svg class="icon"><use href="#i-parallel"/></svg>平行</button>
                <button class="tool"><svg class="icon"><use href="#i-ptangle"/></svg>点角<i class="drop"></i></button>
                <button class="tool"><svg class="icon"><use href="#i-threeaxis"/></svg>三点辅轴<i class="drop"></i></button>
                <button class="tool"><svg class="icon"><use href="#i-brush"/></svg>删除辅轴</button>
                <button class="tool"><svg class="icon"><use href="#i-dim"/></svg>尺寸标注<i class="drop"></i></button>
            </div>
        </div>

        <div class="row">
            <div class="strip"><i class="grip"></i>
                <button class="tool"><svg class="icon"><use href="#i-pointer"/></svg>选择<i class="drop"></i></button>
                <i class="sep"></i>
                <button class="tool"><svg class="icon"><use href="#i-line"/></svg>直线</button>
                <button class="tool"><svg class="icon"><use href="#i-ptlen"/></svg>点加长度</button>
                <button class="tool"><svg class="icon"><use href="#i-arc"/></svg>三点画弧<i class="drop"></i></button>
                <span class="pick short"><select aria-label="画弧方式"><option></option></select></span>
                <button class="tool"><svg class="icon"><use href="#i-rect"/></svg>矩形</button>
                <i class="sep"></i>
                <button class="tool"><svg class="icon"><use href="#i-smart"/></svg>智能布置<i class="drop tight"></i></button>
            </div>
            <div class="strip floating"><i class="grip"></i></div>
        </div>

        <!-- model view -->
        <svg class="canvas" viewBox="167 168 1199 305" preserveAspectRatio="xMinYMin slice" role="img" aria-label="三维视图">
            <path d="M167 467.500L953 168M1250 293.500L1366 249.500" stroke="#800000" stroke-width="1"/>
            <path d="M308 473L603 361" stroke="#f00" stroke-width="1"/>
            <g shape-rendering="crispEdges">
                <path d="M608 324L671 349 671 393 653 473H586z" fill="#009b00"/>
                <path d="M608 324L1012 168H1143L671 349z" fill="#00e600"/>
                <path d="M665 393L739 420 1265 220 1256 278 745 473H653z" fill="#00b300"/>
                <path d="M745 473L1256 278 1229 473z" fill="#b3b300"/>
                <path d="M671 349L1143 168H1292L745 377z" fill="#e4e4e4"/>
                <path d="M745 377L1292 168H1352L1349 188 739 421z" fill="#b2b2b2"/>
                <path d="M671 349L745 377 739 421 665 393z" fill="#9a9a9a"/>
            </g>
            <g fill="none" stroke="#c8c8c8">
                <circle cx="766" cy="320.500" r="135.500"/>
                <circle cx="766" cy="185" r="9"/>
                <circle cx="766" cy="456" r="9"/>
                <circle cx="630.500" cy="320.500" r="9"/>
                <circle cx="901.500" cy="320.500" r="9"/>
            </g>
            <path d="M222 423L189 411" stroke="#0f0" stroke-width="4"/>
            <path d="M182 407l10 0-3 7z" fill="#0f0"/>
            <path d="M222 423L244 415" stroke="#f00" stroke-width="4"/>
            <path d="M251 411l-8 0 3 6z" fill="#f00"/>
            <path d="M222 423L227 387" stroke="#007bff" stroke-width="4"/>
            <path d="M228 377l-5 12h8z" fill="#007bff"/>
            <path d="M219 374.500h8L219 383.500h8" fill="none" stroke="#007bff"/>
            <path d="M192 402l5 5 5-5M197 407v5" fill="none" stroke="#0f0"/>
            <path d="M229 404l9 9M238 404l-9 9" stroke="#f00"/>
            <circle cx="341.500" cy="460" r="12.500" fill="none" stroke="#008000"/>
            <text x="342" y="465" class="axis-name">D</text>
        </svg>

        <div class="row snapbar">
            <div class="strip"><i class="grip"></i>
                <button class="tool"><svg class="icon"><use href="#i-ortho"/></svg>正交</button>
                <button class="tool on"><svg class="icon"><use href="#i-snap"/></svg>对象捕捉</button>
                <button class="tool"><svg class="icon"><use href="#i-dyn"/></svg>动态输入</button>
            </div>
            <div class="strip"><i class="grip"></i>
                <button class="tool"><svg class="icon"><use href="#i-cross"/></svg>交点</button>
                <button class="tool on"><svg class="icon"><use href="#i-perp"/></svg>垂点</button>
                <button class="tool on"><svg class="icon"><use href="#i-mid"/></svg>中点</button>
                <button class="tool"><svg class="icon"><use href="#i-vertex"/></svg>顶点</button>
                <button class="tool"><svg class="icon"><use href="#i-coord"/></svg>坐标</button>
            </div>
            <div class="strip"><i class="grip"></i>
                <span class="pick short"><select aria-label="偏移方式"><option>不偏移</option></select></span>
                <i class="sep"></i>
                <label class="num">X=<span class="spin"><input type="text" value="0"></span>mm</label>
                <label class="num">Y=<span class="spin"><input type="text" value="0"></span>mm</label>
                <i class="sep"></i>
                <label class="tick"><input type="checkbox">旋转</label>
                <label class="num"><span class="spin wide"><input type="text" value="0.000" aria-label="旋转角度"></span>°</label>
            </div>
        </div>

        <div class="rebar">
            <div class="splitter">
                <button aria-label="关闭"><svg viewBox="0 0 10 10"><path d="M.5.5h9v9h-9z" fill="#eee" stroke="#701818"/><path d="M2 2l6 6M8 2L2 8" stroke="#111" stroke-width="1.300"/></svg></button>
            </div>
            <div class="rebar-body">
                <div class="strip">
                    <div class="nav">
                        <button class="tool" disabled aria-label="首行"><svg class="icon"><use href="#i-first"/></svg></button>
                        <button class="tool" disabled aria-label="上一行"><svg class="icon"><use href="#i-prev"/></svg></button>
                        <button class="tool" disabled aria-label="下一行"><svg class="icon"><use href="#i-next"/></svg></button>
                        <button class="tool" disabled aria-label="末行"><svg class="icon"><use href="#i-last"/></svg></button>
                        <i class="sep"></i>
                        <button class="tool" disabled aria-label="上移"><svg class="icon"><use href="#i-up"/></svg></button>
                        <button class="tool" disabled aria-label="下移"><svg class="icon"><use href="#i-down"/></svg></button>
                        <i class="sep"></i>
                    </div>
                    <button class="tool" disabled><svg class="icon"><use href="#i-insert"/></svg>插入</button>
                    <button class="tool" disabled><svg class="icon"><use href="#i-delrow"/></svg>删除</button>
                    <button class="tool" disabled><svg class="icon"><use href="#i-scale"/></svg>缩尺配筋</button>
                    <button class="tool" disabled><svg class="icon"><use href="#i-info"/></svg>钢筋信息</button>
                    <button class="tool" disabled><svg class="icon"><use href="#i-library"/></svg>钢筋图库</button>
                    <button class="tool"><svg class="icon"><use href="#i-other"/></svg>其他<i class="drop tight"></i></button>
                    <button class="tool">关闭</button>
                    <i class="sep"></i>
                    <output>单构件钢筋总重(kg) : 0</output>
                </div>
                <div class="grid">
                    <table>
                        <colgroup>
                            <col class="c-head"><col class="c-name"><col class="c-dia"><col class="c-grade"><col class="c-no"><col class="c-shape"><col class="c-calc"><col class="c-desc"><col class="c-unit"><col class="c-count"><col class="c-count"><col class="c-loss"><col class="c-unit"><col class="c-unit"><col class="c-type"><col class="c-type">
                        </colgroup>
                        <thead>
                            <tr><th></th><th class="picked">筋号</th><th>直径<kbd>(mm)</kbd></th><th>级别</th><th>图号</th><th>图形</th><th>计算公式</th><th>公式描述</th><th>长度<kbd>(mm)</kbd></th><th>根数</th><th>搭接</th><th>损耗<kbd>(%)</kbd></th><th>单重<kbd>(kg)</kbd></th><th>总重<kbd>(kg)</kbd></th><th>钢筋归类</th><th>搭接形式</th></tr>
                        </thead>
                        <tbody>
                            <tr><th><kbd>1*</kbd></th><td class="picked"></td><td></td><td></td><td></td><td></td><td></td><td></td><td></td><td></td><td></td><td></td><td></td><td></td><td></td><td></td></tr>
                        </tbody>
                    </table>
                    <div class="hscroll">
                        <svg class="icon" viewBox="0 0 16 16"><path d="M10 4L6 8l4 4" fill="none" stroke="#505050" stroke-width="2"/></svg>
                        <div class="track"><div class="thumb"></div></div>
                        <svg class="icon" viewBox="0 0 16 16"><path d="M6 4l4 4-4 4" fill="none" stroke="#505050" stroke-width="2"/></svg>
                    </div>
                </div>
            </div>
        </div>
    </section>
</main>

<div class="status">
    <span class="s-pos">X=72817 Y=11994</span>
    <span class="s-height"><b>层高</b>:2.8m</span>
    <span class="s-base"><b>底标高</b>:17.55m</span>
    <span class="s-count">0</span>
    <span class="s-rest"></span>
    <span class="s-fps">315.7 FPS</span>
</div>

<footer class="taskbar">
    <button class="start" aria-label="开始"><svg class="icon" viewBox="0 0 16 16"><path d="M0 2.300l7-1v6.200H0zM8 1.200L16 0v7.500H8zM0 8.500h7v6.200l-7-1zM8 8.500h8V16l-8-1.200z" fill="#fff"/></svg></button>
    <label class="search">
        <svg class="ring" viewBox="0 0 24 24"><circle cx="12" cy="12" r="9" fill="none" stroke="#fff" stroke-width="2.800"/></svg>
        <input type="text" placeholder="在这里输入你要搜索的内容">
        <svg class="icon" viewBox="0 0 16 16"><path d="M5.500.5h5v10h-5z" fill="none" stroke="#9a9a9a"/><path d="M3.500 8v5h9V8M8 13v3M5 15.500h6" fill="none" stroke="#9a9a9a"/></svg>
    </label>
    <div class="pinned">
        <button aria-label="任务视图"><svg viewBox="0 0 24 24"><path d="M6.500 5.500h11v13h-11zM5 7.500H2.500v9H5M19 7.500h2.500v9H19" fill="none" stroke="#fff"/></svg></button>
        <button aria-label="工具"><svg><use href="#k-knot"/></svg></button>
        <button aria-label="浏览器" class="white"><svg viewBox="0 0 24 24"><use href="#k-e"/><use href="#k-orbit"/></svg></button>
        <button aria-label="广联达云"><svg><use href="#k-swirl"/></svg></button>
    </div>
    <div class="running">
        <button aria-label="Edge"><svg><use href="#k-edge"/></svg></button>
        <button aria-label="IE" class="ie"><svg viewBox="0 0 24 24"><use href="#k-e"/><path d="M22 2q-5-2-11 3-6 5-8 11-1 6 2 6" fill="none" stroke="#f5c433" stroke-width="2.200"/></svg></button>
        <button aria-label="文件资源管理器"><svg><use href="#k-folder"/></svg></button>
        <button class="open" aria-label="广联达"><svg><use href="#k-glodon"/></svg></button>
        <button class="open white" aria-label="360浏览器"><svg viewBox="0 0 24 24"><use href="#k-green"/><g transform="translate(3 3) scale(.75)"><use href="#k-e"/></g><use href="#k-orbit"/></svg></button>
        <button class="open active" aria-label="钢筋算量"><svg><use href="#i-app"/></svg></button>
        <button class="open" aria-label="记事"><svg><use href="#k-note"/></svg></button>
        <button class="open" aria-label="查看器"><svg><use href="#k-book"/></svg></button>
    </div>
    <div class="tray">
        <span>链接</span>
        <svg class="icon" viewBox="0 0 16 16"><path d="M2 11l6-6 6 6" fill="none" stroke="#fff" stroke-width="1.300"/></svg>
        <svg class="icon" viewBox="0 0 16 16"><path d="M4.500 5.500h10v7h-10z" fill="none" stroke="#fff"/><path d="M6 7h7v4H6zM15 8h1v2h-1zM1 2h1v3H1zM4 2h1v3H4zM0 4h6v3l-2 1H2L0 7z" fill="#fff"/><path d="M3 8v4h2" stroke="#fff" fill="none"/></svg>
        <svg class="icon" viewBox="0 0 16 16"><path d="M2 14Q3 4 14 3M5.500 14q1-7 8.500-7.500M9 14q1-4 5-4.500" fill="none" stroke="#ccc" stroke-width="1.300"/><circle cx="13" cy="13" r="1.500" fill="#fff"/></svg>
        <svg class="icon" viewBox="0 0 16 16"><path d="M1 6h2l3-3v10l-3-3H1zM8 6q2 2 0 4M10 4q4 4 0 8" fill="none" stroke="#fff"/><path d="M12.500 2q5 6 0 12" fill="none" stroke="#888"/></svg>
        <svg class="keyboard" viewBox="0 0 24 14"><path d="M.5.5h22v12H.5z" fill="none" stroke="#fff"/><path d="M3 4.500h18M3 6.500h18" stroke="#fff" stroke-dasharray="1 1"/><path d="M5 9.500h14" stroke="#fff"/></svg>
        <span>中</span>
        <svg class="icon"><use href="#k-s"/></svg>
        <time>19:37<br>2018/4/18</time>
        <button aria-label="通知"><svg viewBox="0 0 28 26"><path d="M1 1h16v13H9l-3 3v-3H1z" fill="#fff"/><path d="M4 4.500h10M4 7.500h10M4 10.500h7" stroke="#111"/><circle cx="17" cy="17" r="8" fill="#2c2c2c" stroke="#777"/></svg><b>1</b></button>
    </div>
</footer>

</body>
</html>
```
FILE: styles.css
```css
*{
    margin: 0;
    padding: 0;
    box-sizing: border-box;
}

body{
    display: flex;
    flex-direction: column;
    height: 100vh;
    overflow: hidden;
    background: #f0f0f0;
    color: #000;
    font: 12px/16px "Open Sans", "Noto Sans CJK SC", sans-serif;
}

button, input, select{
    font: inherit;
    color: inherit;
    border: none;
    background: none;
    outline: none;
}

ul{
    list-style: none;
}

svg{
    display: block;
    flex: none;
}

.sprite{
    position: absolute;
}

.icon{
    width: 16px;
    height: 16px;
}

/* half-width latin letters next to chinese labels */
kbd{
    font-family: "Liberation Mono", monospace;
    font-size: 11px;
}

/* title */
.titlebar{
    display: flex;
    align-items: center;
    flex: none;
    height: 23px;
    padding-left: 2px;
    background: #fff;
}

.titlebar h1{
    flex: 1;
    margin-left: 5px;
    font-family: Inter, "Noto Sans CJK SC", sans-serif;
    font-size: 12px;
    font-weight: 400;
    white-space: nowrap;
}

.window-buttons{
    display: flex;
    margin-right: 2px;
}

.window-buttons button{
    display: flex;
    justify-content: center;
    width: 46px;
}

.ime{
    position: absolute;
    top: 2px;
    left: 701px;
    display: flex;
    align-items: center;
    gap: 6px;
    height: 25px;
    padding-right: 2px;
    border: 1px solid #b4c4d6;
    background: #fff;
    color: #1c74cc;
}

.ime b{
    font-size: 15px;
}

.ime-logo{
    width: 27px;
    height: 27px;
}

.ball{
    position: absolute;
    top: -28px;
    left: 1076px;
    width: 48px;
    height: 48px;
    padding-top: 24px;
    border: 3px solid #d4e4d8;
    border-radius: 50%;
    background: #3cc065;
    box-shadow: 0 1px 5px rgba(0, 0, 0, .5);
    color: #fff;
    font-size: 12px;
    font-weight: 700;
    text-align: center;
}

/* menus and toolbars */
.menubar, .row{
    display: flex;
    align-items: center;
    flex: none;
    height: 28px;
}

.menubar{
    height: 29px;
}

.menus{
    display: flex;
    justify-content: space-between;
    width: 781px;
    margin: 0 1px 0 2px;
}

.menus button{
    padding: 0 5px;
    white-space: nowrap;
}

.menubar + .row{
    height: 32px;
    padding-bottom: 2px;
}

.strip{
    display: flex;
    align-items: center;
    height: 27px;
    margin-right: 2px;
    padding: 0 1px 0 2px;
    border-radius: 3px;
    background: linear-gradient(#fdfdfd, #f1f1f1);
}

.grow{
    flex: 1;
    margin-right: 0;
}

.tip{
    width: 187px;
    margin-left: 2px;
    justify-content: center;
}

.tip a{
    color: #006a6a;
    text-decoration: none;
}

.tool{
    display: flex;
    align-items: center;
    flex: none;
    gap: 3px;
    height: 24px;
    padding: 0 3px;
    border: 1px solid transparent;
    white-space: nowrap;
}

.tool:disabled{
    color: #8c8c8c;
}

.tool.on{
    border-color: #1a7fd6;
    background: #dcebf7;
}

.tool.combo{
    background: #fff;
}

.drop{
    width: 9px;
    height: 4px;
    background: #000;
    clip-path: polygon(2px 0, 9px 0, 5px 100%);
}

.drop.tight{
    width: 7px;
    margin-left: -2px;
    clip-path: polygon(0 0, 7px 0, 3px 100%);
}

.sep{
    width: 1px;
    height: 18px;
    margin: 0 3px 0 2px;
    background: #bdbdbd;
}

.grip{
    width: 3px;
    height: 17px;
    margin: 0 2px 0 1px;
    background: repeating-linear-gradient(#b8b8b8 0 2px, transparent 2px 5px);
}

.more{
    align-self: flex-start;
    margin: 0 3px 0 auto;
    font-size: 14px;
    font-weight: 600;
    line-height: 13px;
}

.file-tools{
    width: 150px;
}

.file-tools .tool{
    padding: 0 2px;
}

.calc-tools{
    width: 550px;
}

.pick{
    display: flex;
    align-items: center;
    width: 70px;
    height: 23px;
    margin-right: 2px;
    background: linear-gradient(to left, #f5f5f5 11px, #fff 11px);
}

.pick.short{
    width: 58px;
}

.pick select{
    flex: 1;
    min-width: 0;
    height: 23px;
    padding-left: 2px;
    appearance: none;
}

.pick::after{
    content: "";
    width: 7px;
    height: 4px;
    margin-right: 2px;
    background: #000;
    clip-path: polygon(0 0, 7px 0, 3px 100%);
}

/* left panel */
main{
    display: flex;
    flex: 1;
    min-height: 0;
}

.sidebar{
    display: flex;
    flex-direction: column;
    width: 167px;
    flex: none;
    border-right: 1px solid #fff;
}

.panel-title{
    display: flex;
    align-items: center;
    height: 16px;
    margin-bottom: 1px;
    background: #0055e5;
    color: #fff;
}

.panel-title h2{
    flex: 1;
    font-size: 13px;
    font-weight: 400;
}

.panel-title button{
    margin-right: 2px;
}

.module{
    height: 22px;
    margin: 0 1px 0 2px;
    border: 1px solid #a0a0a0;
    border-top-color: #d0d0d0;
    background: #f0f0f0;
    text-align: center;
}

.tree-panel{
    display: flex;
    flex-direction: column;
    flex: 1;
    min-height: 0;
    margin: 0 1px 0 2px;
    border: 1px solid #a0a0a0;
}

.tree-tools{
    display: flex;
    gap: 6px;
    height: 26px;
    padding: 5px 5px 0;
}

.tree{
    display: flex;
    flex: 1;
    min-height: 0;
    overflow: hidden;
    border-top: 1px solid #828790;
    background: #fff;
    padding: 2px 2px 1px 0;
}

.branches{
    flex: 1;
    min-width: 0;
    overflow: hidden;
    background: repeating-linear-gradient(#909090 0 1px, transparent 1px 2px) 12px 0 / 1px 100% no-repeat;
}

.branches ul{
    margin-left: 31px;
    background: repeating-linear-gradient(#909090 0 1px, transparent 1px 2px) 0 0 / 1px calc(100% - 8px) no-repeat;
}

.branches ul li, .node{
    display: flex;
    align-items: center;
    height: 16px;
    white-space: nowrap;
}

.branches ul .icon{
    margin-right: 5px;
}

.branches ul li::before{
    content: "";
    width: 11px;
    border-top: 1px dotted #909090;
}

.branches .current{
    background: linear-gradient(to right, transparent 11px, #d4d4d4 11px);
}

.cols{
    width: 13px;
    height: 14px;
}

.node .icon{
    margin-right: 5px;
}

.node::before{
    content: "";
    width: 6px;
    height: 6px;
    margin: 0 8px 3px 8px;
    border: solid #404040;
    border-width: 0 2px 2px 0;
    background: #fff;
    transform: rotate(45deg);
}

.vscroll{
    display: flex;
    flex-direction: column;
    width: 15px;
    background: #f0f0f0;
}

.vscroll .thumb{
    flex: 1;
    margin: 154px 0 30px;
    background: #cdcdcd;
}

/* right side */
.work{
    display: flex;
    flex-direction: column;
    flex: 1;
    min-width: 0;
}

.work .row{
    padding-bottom: 2px;
}

.work .strip{
    margin-left: 2px;
    margin-right: 0;
}

.work .strip:first-child{
    margin-left: 0;
}

.work .floating{
    width: 30px;
    margin: 0 80px 0 auto;
}

.canvas{
    width: 100%;
    height: 305px;
    background: #000;
}

.axis-name{
    fill: #fff;
    font: 700 14px "Liberation Mono", monospace;
    text-anchor: middle;
}

.work .snapbar{
    height: 30px;
    padding-bottom: 0;
}

.num, .tick{
    display: flex;
    align-items: center;
    gap: 2px;
    margin-right: 5px;
    color: #7a7a7a;
}

.sep + .num{
    margin-left: -1px;
}

.spin{
    display: flex;
    align-items: center;
    width: 58px;
    height: 24px;
    padding-right: 4px;
    border: 1px solid #767676;
}

.spin.wide{
    width: 68px;
}

.spin input{
    flex: 1;
    min-width: 0;
    padding-right: 9px;
    text-align: right;
}

.spin::after{
    content: "";
    width: 6px;
    height: 16px;
    background: #606060;
    clip-path: polygon(0 4px, 3px 1px, 6px 4px, 0 4px, 0 12px, 6px 12px, 3px 15px, 0 12px);
}

.tick{
    gap: 8px;
    color: #000;
}

.tick input{
    width: 11px;
    height: 11px;
    border: 1px solid #a0a0a0;
    appearance: none;
}

.rebar{
    display: flex;
    flex: 1;
    min-height: 0;
}

.splitter{
    width: 12px;
    margin-top: 4px;
    padding-left: 1px;
    background: radial-gradient(circle at 2px 2px, #c4c4c4 1px, transparent 2px) 2px 2px / 5px 5px;
    background-clip: content-box;
}

.splitter button{
    display: flex;
    width: 10px;
    height: 12px;
    background: #f0f0f0;
}

.rebar-body{
    display: flex;
    flex-direction: column;
    flex: 1;
    min-width: 0;
}

.work .rebar-body .strip{
    height: 26px;
    margin: 3px 1px 1px 2px;
}

.nav{
    display: flex;
    align-items: center;
    margin: 0 -4px;
}

output{
    margin-left: 5px;
}

.grid{
    display: flex;
    flex-direction: column;
    flex: 1;
    overflow: clip;
    overflow-clip-margin: content-box;
    padding: 0 2px 2px 1px;
    border: 1px solid #a0a0a0;
    background: #fff;
}

table{
    width: 1204px;
    table-layout: fixed;
    border-collapse: separate;
    border-spacing: 0;
}

th, td{
    height: 19px;
    border-right: 1px solid #c0c0c0;
    border-bottom: 1px solid #c0c0c0;
    font-weight: 400;
    white-space: nowrap;
}

thead th{
    height: 20px;
    background: linear-gradient(#fff, #efefef);
}

thead .picked{
    background: linear-gradient(#f9dba4, #f3c162);
    color: #600060;
}

tbody th{
    background: #ffd58c;
    color: #600060;
}

td.picked{
    border-right-color: #000;
    background: #d8e9f8;
}

.c-head{ width: 33px; }
.c-name{ width: 73px; }
.c-dia{ width: 56px; }
.c-grade{ width: 36px; }
.c-no{ width: 33px; }
.c-shape{ width: 201px; }
.c-calc{ width: 166px; }
.c-desc{ width: 156px; }
.c-unit{ width: 61px; }
.c-count{ width: 38px; }
.c-loss{ width: 50px; }
.c-type{ width: 71px; }

.hscroll{
    display: flex;
    height: 15px;
    margin-top: auto;
    background: #f0f0f0;
}

.track{
    flex: 1;
}

.track .thumb{
    width: 72%;
    height: 15px;
    background: #cdcdcd;
}

/* status line */
.status{
    display: flex;
    flex: none;
    gap: 2px;
    height: 22px;
    padding-top: 2px;
    font: 10px/18px "Liberation Mono", "Noto Sans CJK SC", monospace;
}

.status b{
    font-size: 12px;
    font-weight: 400;
}

.status span{
    padding-left: 1px;
    border: 1px solid #d6d6d6;
    background: linear-gradient(#fdfdfd, #f0f0f0);
    white-space: pre;
}

.s-pos{ width: 148px; }
.s-height{ width: 78px; }
.s-base{ width: 98px; }
.s-count{ width: 48px; }
.s-rest{ flex: 1; }
.s-fps{ width: 70px; }

/* taskbar */
.taskbar{
    display: flex;
    flex: none;
    height: 40px;
    background: #000c0e;
    color: #fff;
}

.taskbar button{
    display: flex;
    align-items: center;
    justify-content: center;
}

.start{
    width: 48px;
    background: #000;
}

.taskbar .start{
    background: #000;
}

.search{
    display: flex;
    align-items: center;
    width: 343px;
    padding: 0 12px 0 8px;
    background: #333;
}

.ring{
    width: 24px;
    height: 24px;
}

.search input{
    flex: 1;
    min-width: 0;
    padding-left: 4px;
    font-size: 14px;
}

.search input::placeholder{
    color: #9b9b9b;
}

.pinned, .running{
    display: flex;
}

.pinned button{
    width: 50px;
}

.running{
    margin-left: 5px;
}

.running button{
    width: 49px;
    border-bottom: 2px solid transparent;
}

.running .open{
    background: linear-gradient(#76b9f5, #76b9f5) center bottom / 40px 2px no-repeat border-box;
}

.running .active{
    border-color: #76b9f5;
    background: #30393c;
}

.pinned svg, .running svg{
    width: 24px;
    height: 24px;
}

.white{
    color: #eee;
}

.ie{
    color: #3fa9ec;
}

.tray{
    display: flex;
    align-items: center;
    gap: 9px;
    margin-left: auto;
}

.keyboard{
    width: 24px;
    height: 14px;
}

.tray time{
    width: 76px;
    line-height: 19px;
    text-align: center;
}

.taskbar .tray button{
    position: relative;
    justify-content: flex-start;
    width: 40px;
    height: 40px;
    margin-right: 4px;
}

.tray button svg{
    width: 28px;
    height: 26px;
}

.tray button b{
    position: absolute;
    top: 16px;
    left: 13px;
}
```
